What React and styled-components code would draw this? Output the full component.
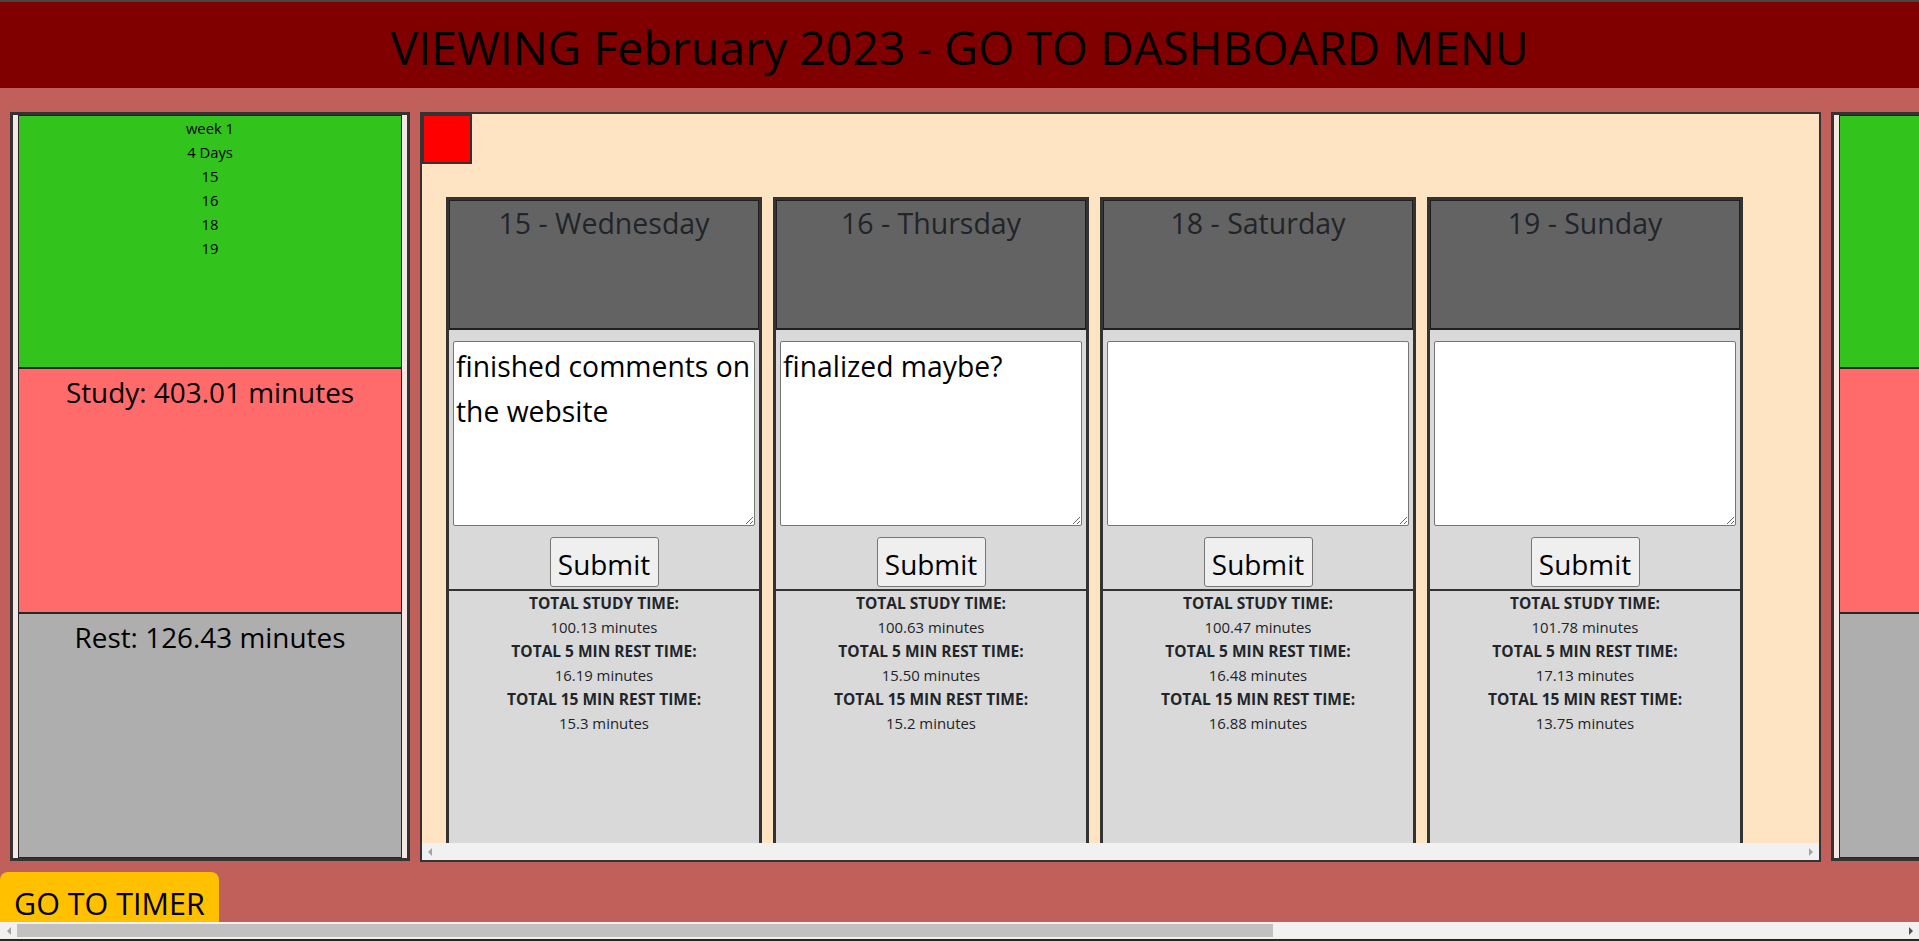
import React from "react";
import styled, { createGlobalStyle } from "styled-components";

const GlobalStyle = createGlobalStyle`
  html, body { margin: 0; padding: 0; height: 100%; overflow: hidden; }
  body {
    background: #c1605a;
    font-family: "Open Sans", "Noto Sans", "DejaVu Sans", sans-serif;
  }
  *, *::before, *::after { box-sizing: border-box; }
`;

const Page = styled.div`
  width: 100vw;
  height: 100vh;
  display: flex;
  flex-direction: column;
  overflow: hidden;
  background: #c1605a;
`;

const Header = styled.header`
  flex: none;
  height: 88px;
  background: #800000;
  border-top: 2px solid #474747;
  padding-top: 22px;
  text-align: center;
`;

const Title = styled.h1`
  margin: 0;
  font-size: 46.4px;
  font-weight: 400;
  line-height: 46px;
  color: #000;
  white-space: nowrap;
`;

const Main = styled.main`
  flex: 1;
  min-height: 0;
  overflow: hidden;
  display: flex;
  flex-direction: column;
  align-items: flex-start;
`;

const PanelRow = styled.div`
  display: flex;
  align-items: flex-start;
  gap: 10px;
  padding: 24px 0 0 10px;
`;

const WeekPanel = styled.section`
  flex: none;
  width: 400px;
  height: 749px;
  border: 3px solid #333;
  background: #f6e7e5;
  padding: 0 5px;
  display: flex;
  flex-direction: column;
`;

const Block = styled.div`
  flex: none;
  height: ${(p) => p.$h}px;
  background: ${(p) => p.$bg};
  border: 1px solid #262626;
  text-align: center;
  color: #000;
`;

const WeekList = styled.div`
  font-size: 14.8px;
  line-height: 24px;
`;

const TotalText = styled.div`
  font-size: 27.9px;
  line-height: 38px;
  padding-top: 4px;
  white-space: nowrap;
`;

const BoardPanel = styled.section`
  flex: none;
  width: 1401px;
  height: 750px;
  border: 2px solid #333;
  background: #ffe4c4;
  display: flex;
  flex-direction: column;
`;

const RedSquare = styled.div`
  flex: none;
  width: 50px;
  height: 50px;
  background: #ff0000;
  border: 2px solid #333;
`;

const CardsArea = styled.div`
  flex: 1;
  min-height: 0;
  overflow: hidden;
  display: flex;
  align-items: flex-start;
  gap: 11px;
  padding: 33px 0 0 24px;
`;

const DayCard = styled.article`
  flex: none;
  width: 316px;
  height: 720px;
  border: 3px solid #333;
  background: #d9d9d9;
`;

const DayHeader = styled.div`
  height: 130px;
  background: #636363;
  border: 1px solid #1f1f1f;
  border-bottom-width: 2px;
  padding-top: 2px;
  text-align: center;
  font-size: 28.5px;
  line-height: 40px;
  color: #212529;
`;

const EntryForm = styled.form`
  display: flex;
  flex-direction: column;
  align-items: center;
  padding: 11px 0 2px;
  border-bottom: 2px solid #333;
`;

const NoteArea = styled.textarea`
  width: 302px;
  height: 185px;
  margin: 0;
  padding: 2px;
  font-family: inherit;
  font-size: 28.3px;
  line-height: 45px;
  color: #000;
  background: #fff;
  border: 1px solid #767676;
  border-radius: 2px;
  outline: none;
`;

const SubmitButton = styled.button`
  margin-top: 11px;
  width: 109px;
  height: 50px;
  padding: 4px 0 0;
  font-family: inherit;
  font-size: 27.9px;
  line-height: 44px;
  color: #000;
  background: #efefef;
  border: 1px solid #767676;
  border-radius: 3px;
`;

const Stats = styled.div`
  text-align: center;
  color: #212529;
  font-size: 14.9px;
  line-height: 24px;
`;

const StatLabel = styled.div`
  font-weight: 700;
  font-size: 15.5px;
`;

const StatValue = styled.div``;

const ScrollTrack = styled.div`
  flex: none;
  height: 17px;
  background: #f1f1f1;
  display: flex;
  align-items: center;
  justify-content: space-between;
  padding: 0 ${(p) => p.$pad || 0}px;
`;

const Arrow = styled.span`
  display: block;
  width: 0;
  height: 0;
  border-top: 4px solid transparent;
  border-bottom: 4px solid transparent;
  ${(p) =>
    p.$dir === "left"
      ? `border-right: 4px solid ${p.$color};`
      : `border-left: 4px solid ${p.$color};`}
`;

const ScrollButton = styled.div`
  flex: none;
  width: 17px;
  height: 17px;
  display: flex;
  align-items: center;
  justify-content: center;
`;

const Thumb = styled.div`
  flex: none;
  width: 1256px;
  height: 13px;
  background: #c1c1c1;
`;

const Spacer = styled.div`
  flex: 1;
`;

const TimerButton = styled.button`
  flex: none;
  margin-top: 10px;
  padding: 10px 14px;
  font-family: inherit;
  font-size: 30.5px;
  line-height: 42px;
  color: #000;
  background: #ffc000;
  border: none;
  border-radius: 8px;
  white-space: nowrap;
`;

const BottomStrip = styled.div`
  flex: none;
  height: 2px;
  background: #2a2523;
`;

const weeks = [
  {
    lines: ["week 1", "4 Days", "15", "16", "18", "19"],
    study: "Study: 403.01 minutes",
    rest: "Rest: 126.43 minutes",
  },
  {
    lines: [],
    study: "",
    rest: "",
  },
];

const days = [
  { title: "15 - Wednesday", note: "finished comments on the website", study: "100.13", five: "16.19", fifteen: "15.3" },
  { title: "16 - Thursday", note: "finalized maybe?", study: "100.63", five: "15.50", fifteen: "15.2" },
  { title: "18 - Saturday", note: "", study: "100.47", five: "16.48", fifteen: "16.88" },
  { title: "19 - Sunday", note: "", study: "101.78", five: "17.13", fifteen: "13.75" },
];

function Week({ week }) {
  return (
    <WeekPanel>
      <Block $h={253} $bg="#32c41c">
        <WeekList>
          {week.lines.map((l, i) => (
            <div key={i}>{l}</div>
          ))}
        </WeekList>
      </Block>
      <Block $h={245} $bg="#ff6b6b">
        {week.study && <TotalText>{week.study}</TotalText>}
      </Block>
      <Block $h={245} $bg="#aeaeae">
        {week.rest && <TotalText>{week.rest}</TotalText>}
      </Block>
    </WeekPanel>
  );
}

function Day({ day }) {
  return (
    <DayCard>
      <DayHeader>{day.title}</DayHeader>
      <EntryForm onSubmit={(e) => e.preventDefault()}>
        <NoteArea defaultValue={day.note} />
        <SubmitButton type="submit">Submit</SubmitButton>
      </EntryForm>
      <Stats>
        <StatLabel>TOTAL STUDY TIME:</StatLabel>
        <StatValue>{day.study} minutes</StatValue>
        <StatLabel>TOTAL 5 MIN REST TIME:</StatLabel>
        <StatValue>{day.five} minutes</StatValue>
        <StatLabel>TOTAL 15 MIN REST TIME:</StatLabel>
        <StatValue>{day.fifteen} minutes</StatValue>
      </Stats>
    </DayCard>
  );
}

export default function App() {
  return (
    <>
      <GlobalStyle />
      <Page>
        <Header>
          <Title>VIEWING February 2023 - GO TO DASHBOARD MENU</Title>
        </Header>
        <Main>
          <PanelRow>
            <Week week={weeks[0]} />
            <BoardPanel>
              <RedSquare />
              <CardsArea>
                {days.map((d) => (
                  <Day key={d.title} day={d} />
                ))}
              </CardsArea>
              <ScrollTrack $pad={6}>
                <Arrow $dir="left" $color="#a3a3a3" />
                <Arrow $dir="right" $color="#a3a3a3" />
              </ScrollTrack>
            </BoardPanel>
            <Week week={weeks[1]} />
          </PanelRow>
          <TimerButton type="button">GO TO TIMER</TimerButton>
        </Main>
        <ScrollTrack>
          <ScrollButton>
            <Arrow $dir="left" $color="#a3a3a3" />
          </ScrollButton>
          <Thumb />
          <Spacer />
          <ScrollButton>
            <Arrow $dir="right" $color="#505050" />
          </ScrollButton>
        </ScrollTrack>
        <BottomStrip />
      </Page>
    </>
  );
}
